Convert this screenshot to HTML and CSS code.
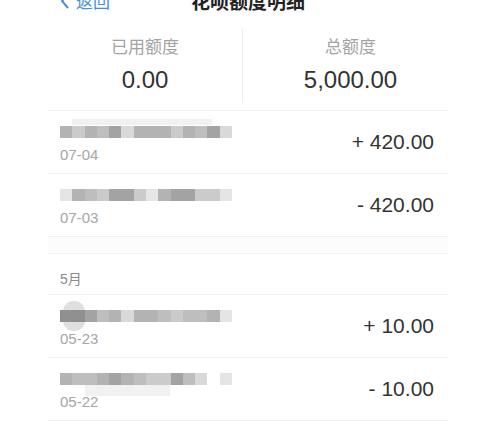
FILE: index.html
```html
<!DOCTYPE html>
<html lang="zh-CN">
<head>
    <meta charset="UTF-8">
    <meta name="viewport" content="width=device-width, initial-scale=1.0">
    <title>花呗额度明细</title>
    <link rel="stylesheet" href="styles.css">
</head>
<body>
    <div class="page">
        <div class="header">
            <a class="back">
                <svg width="10" height="16" viewBox="0 0 10 16"><path d="M8 1 L2 8 L8 15" fill="none" stroke="#4a8fd8" stroke-width="2"/></svg>
                返回
            </a>
            <div class="title">花呗额度明细</div>
            <div></div>
        </div>

        <div class="summary">
            <div class="summary-col used">
                <div class="label">已用额度</div>
                <div class="value">0.00</div>
            </div>
            <div class="summary-col total">
                <div class="label">总额度</div>
                <div class="value">5,000.00</div>
            </div>
        </div>

        <div class="record">
            <div class="info">
                <div class="bar">
                    <i class="g3"></i><i class="g5"></i><i class="g3"></i><i class="g4"></i><i class="g2"></i><i class="g6"></i><i class="g3"></i><i class="g3"></i><i class="g3"></i><i class="g5"></i><i class="g3"></i><i class="g4"></i><i class="g2"></i><i class="g6"></i>
                    <span class="ghost above"></span>
                </div>
                <div class="date">07-04</div>
            </div>
            <div class="amount">+ 420.00</div>
        </div>

        <div class="record">
            <div class="info">
                <div class="bar">
                    <i class="g7"></i><i class="g3"></i><i class="g4"></i><i class="g5"></i><i class="g2"></i><i class="g2"></i><i class="g5"></i><i class="g7"></i><i class="g3"></i><i class="g2"></i><i class="g2"></i><i class="g5"></i><i class="g5"></i><i class="g7"></i>
                </div>
                <div class="date">07-03</div>
            </div>
            <div class="amount">- 420.00</div>
        </div>

        <div class="spacer"></div>
        <div class="month">5月</div>

        <div class="record">
            <div class="info">
                <div class="bar">
                    <i class="g1"></i><i class="g1"></i><i class="g2"></i><i class="g4"></i><i class="g3"></i><i class="g6"></i><i class="g3"></i><i class="g3"></i><i class="g4"></i><i class="g5"></i><i class="g4"></i><i class="g4"></i><i class="g3"></i><i class="g7"></i>
                    <span class="blob"></span>
                </div>
                <div class="date">05-23</div>
            </div>
            <div class="amount">+ 10.00</div>
        </div>

        <div class="record">
            <div class="info">
                <div class="bar">
                    <i class="g3"></i><i class="g4"></i><i class="g4"></i><i class="g3"></i><i class="g2"></i><i class="g3"></i><i class="g4"></i><i class="g5"></i><i class="g5"></i><i class="g2"></i><i class="g4"></i><i class="g6"></i><i class="g0"></i><i class="g7"></i>
                    <span class="ghost below"></span>
                </div>
                <div class="date">05-22</div>
            </div>
            <div class="amount">- 10.00</div>
        </div>
    </div>
</body>
</html>
```

FILE: styles.css
```css
body {
    margin: 0;
    background-color: #ffffff;
    font-family: "Liberation Sans", "Noto Sans CJK SC", sans-serif;
    color: #333333;
    overflow: hidden;
}
.page {
    width: 400px;
    margin-left: 48px;
}
.header {
    display: grid;
    grid-template-columns: 1fr auto 1fr;
    align-items: center;
    height: 22px;
    margin-top: -13px;
}
.header .back {
    display: flex;
    align-items: center;
    gap: 6px;
    padding-left: 12px;
    color: #4a8fd8;
    font-size: 17px;
}
.header .title {
    font-size: 19px;
    font-weight: bold;
    color: #222222;
}
.summary {
    display: flex;
    padding-top: 19px;
    padding-bottom: 7px;
    border-bottom: 1px solid #eeeeee;
}
.summary-col {
    height: 75px;
    box-sizing: border-box;
    padding-top: 8px;
    text-align: center;
}
.summary-col.used {
    width: 195px;
    border-right: 1px solid #eeeeee;
}
.summary-col.total {
    flex: 1;
    padding-left: 10px;
}
.summary .label {
    font-size: 17px;
    line-height: 24px;
    color: #a3a3a3;
}
.summary .value {
    margin-top: 4px;
    font-size: 24px;
    line-height: 32px;
    color: #333333;
}
.record {
    display: flex;
    align-items: center;
    justify-content: space-between;
    height: 62px;
    padding: 0 14px 0 12px;
    border-bottom: 1px solid #f0f0f0;
}
.record .info {
    padding-top: 7px;
}
.bar {
    position: relative;
    display: grid;
    grid-template-columns: repeat(14, 1fr);
    width: 172px;
    height: 12px;
}
.bar i { display: block; }
.g0 { background-color: transparent; }
.g1 { background-color: #8e8e8e; }
.g2 { background-color: #a3a3a3; }
.g3 { background-color: #b3b3b3; }
.g4 { background-color: #bebebe; }
.g5 { background-color: #cbcbcb; }
.g6 { background-color: #d9d9d9; }
.g7 { background-color: #e5e5e5; }
.bar .blob {
    position: absolute;
    left: 3px;
    top: -9px;
    width: 22px;
    height: 30px;
    border-radius: 10px;
    background-color: rgba(150, 150, 150, 0.3);
}
.bar .ghost {
    position: absolute;
    height: 6px;
    background-color: rgba(200, 200, 200, 0.25);
}
.bar .ghost.above {
    left: 12px;
    top: -7px;
    width: 140px;
}
.bar .ghost.below {
    left: 25px;
    top: 12px;
    width: 85px;
    height: 11px;
}
.record .date {
    margin-top: 7px;
    font-size: 15px;
    line-height: 20px;
    color: #a6a6a6;
}
.record .amount {
    font-size: 21px;
    color: #333333;
}
.spacer {
    height: 16px;
    background-color: #fcfcfc;
    border-bottom: 1px solid #f2f2f2;
}
.month {
    height: 41px;
    box-sizing: border-box;
    padding: 16px 0 0 12px;
    font-size: 14px;
    line-height: 18px;
    color: #8a8a8a;
    border-bottom: 1px solid #f0f0f0;
}
```
